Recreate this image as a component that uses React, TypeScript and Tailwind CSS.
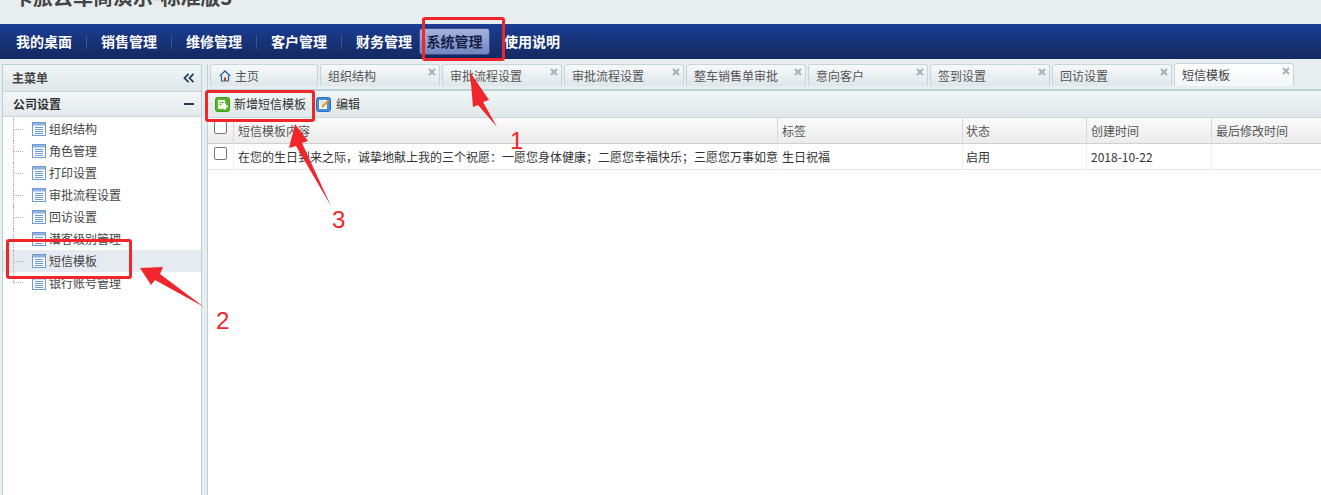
const navItems = ['我的桌面', '销售管理', '维修管理', '客户管理', '财务管理', '系统管理', '使用说明'];
const treeItems = ['组织结构', '角色管理', '打印设置', '审批流程设置', '回访设置', '潜客级别管理', '短信模板', '银行账号管理'];
const tabs = ['组织结构', '审批流程设置', '审批流程设置', '整车销售单审批', '意向客户', '签到设置', '回访设置', '短信模板'];
const message = '在您的生日到来之际，诚挚地献上我的三个祝愿：一愿您身体健康；二愿您幸福快乐；三愿您万事如意';

const TableIcon = () => (
  <svg width="14" height="14" viewBox="0 0 14 14" className="shrink-0">
    <rect x="0.5" y="0.5" width="13" height="13" fill="#ffffff" stroke="#6f9bd4" />
    <rect x="1" y="1" width="12" height="2.5" fill="#8db2e2" />
    <path d="M3 5.5h8M3 7.5h8M3 9.5h8M3 11.5h8" stroke="#6f9bd4" />
  </svg>
);

const HomeIcon = () => (
  <svg width="12" height="12" viewBox="0 0 12 12" className="shrink-0">
    <path d="M0.8 6 6 1l5.2 5" fill="none" stroke="#2f5f9e" strokeWidth="1.3" />
    <path d="M2.5 5.5v5.5h7V5.5" fill="none" stroke="#2f5f9e" strokeWidth="1.2" />
    <rect x="5" y="7.5" width="2" height="3.5" fill="#a2482f" />
  </svg>
);

const AddIcon = () => (
  <svg width="15" height="15" viewBox="0 0 15 15" className="shrink-0">
    <rect x="0.5" y="0.5" width="14" height="14" rx="2" fill="#58b22b" stroke="#3f9a1b" />
    <rect x="3" y="3" width="7" height="9" fill="#e8f6de" />
    <path d="M4.5 5.5h4M4.5 7.5h2" stroke="#58b22b" />
    <path d="M10 6.5v6M7 9.5h6" stroke="#ffffff" strokeWidth="2" />
  </svg>
);

const EditIcon = () => (
  <svg width="15" height="15" viewBox="0 0 15 15" className="shrink-0">
    <rect x="0.5" y="0.5" width="14" height="14" rx="2" fill="#3d8de0" stroke="#2b72c4" />
    <rect x="3" y="3" width="8" height="9" fill="#ffffff" />
    <path d="M4.5 5h3M4.5 7h2" stroke="#9bbfe6" />
    <path d="m5.5 10.5 1-2.5 5-5 1.5 1.5-5 5z" fill="#f0a92c" stroke="#c9711b" strokeWidth="0.5" />
  </svg>
);

const Checkbox = () => (
  <span className="block w-[13px] h-[13px] rounded-[2px] border border-[#767676] bg-white" />
);

const CloseMark = () => (
  <svg width="8" height="8" viewBox="0 0 8 8" className="absolute top-[3px] right-[3px]">
    <path d="M1 1l6 6M7 1 1 7" stroke="#a3b2b8" strokeWidth="2" />
  </svg>
);

const Annotations = () => (
  <>
    <div className="absolute left-[422px] top-[17px] w-[83px] h-[44px] rounded-[3px] border-[3px] border-[#f0262b]" />
    <div className="absolute left-[205px] top-[90px] w-[110px] h-[32px] rounded-[3px] border-[3px] border-[#f0262b]" />
    <div className="absolute left-[6px] top-[239px] w-[126px] h-[40px] rounded-[3px] border-[3px] border-[#f0262b]" />
    <svg width="1321" height="495" viewBox="0 0 1321 495" className="absolute left-0 top-0 pointer-events-none">
      <polygon points="470,72 489,100 483,102 497,127 478,105 473,107" fill="#f0262b" />
      <polygon points="140,268 163,267 160,274 204,307 155,280 151,285" fill="#f0262b" />
      <polygon points="295,124 308,141 302,143 331,206 296,146 289,148" fill="#f0262b" />
    </svg>
    <span className="absolute left-[510px] top-[127px] text-[24px] leading-7 text-[#f0262b] font-['Liberation_Sans',sans-serif]">1</span>
    <span className="absolute left-[216px] top-[307px] text-[24px] leading-7 text-[#f0262b] font-['Liberation_Sans',sans-serif]">2</span>
    <span className="absolute left-[332px] top-[206px] text-[24px] leading-7 text-[#f0262b] font-['Liberation_Sans',sans-serif]">3</span>
  </>
);

const App = () => {
  return (
    <div className="relative w-[1321px] h-[495px] overflow-hidden flex flex-col bg-[#e8eef0] text-[12px] text-[#333333] font-['Noto_Sans_CJK_SC','Noto_Sans',sans-serif]">
      <div className="h-[24px] shrink-0 overflow-hidden pl-[13px]">
        <p className="-mt-[17px] text-[20px] leading-[28px] font-bold text-[#444444]">卡旅云车商演示-标准版3</p>
      </div>

      <nav className="h-[35px] shrink-0 flex items-center pl-[2px] bg-linear-to-b from-[#1b3d94] to-[#13295f]">
        {navItems.map((item, i) => (
          <div key={item} className="flex items-center">
            {item === '系统管理' ? (
              <span className="flex items-center justify-center w-[71px] h-[27px] rounded-[3px] border border-[#3a4f91] bg-linear-to-b from-[#a6b3dc] to-[#7485bf] text-[14px] font-bold text-[#14204a]">
                {item}
              </span>
            ) : (
              <span className={i === 6 ? 'ml-[14px] text-[14px] font-bold text-white' : 'px-[14px] text-[14px] font-bold text-white'}>{item}</span>
            )}
            {i < 4 && <span className="w-px h-[14px] bg-[#3a5596]" />}
            {i === 4 && <span className="w-px h-[14px] bg-transparent -ml-[8px]" />}
          </div>
        ))}
      </nav>

      <div className="flex-1 min-h-0 flex pt-[5px] pl-[2px] gap-[5px]">
        <aside className="w-[200px] shrink-0 flex flex-col border border-[#b9d0d7] border-b-0 bg-white">
          <div className="h-[27px] shrink-0 flex items-center justify-between pl-[9px] pr-[6px] border-b border-[#c7d7dc] bg-linear-to-b from-[#f1f5f6] to-[#dfe7ea]">
            <span className="font-bold text-[#444444]">主菜单</span>
            <svg width="12" height="10" viewBox="0 0 12 10">
              <path d="M5.5 0.8 1.5 5l4 4.2M10.5 0.8 6.5 5l4 4.2" fill="none" stroke="#1f3a5f" strokeWidth="1.8" />
            </svg>
          </div>
          <div className="h-[25px] shrink-0 flex items-center justify-between pl-[10px] pr-[7px] border-b border-[#c7d7dc] bg-linear-to-b from-[#f3f6f7] to-[#e3eaec]">
            <span className="font-bold text-[#333333]">公司设置</span>
            <span className="w-[10px] h-[2px] bg-[#1f3a5f]" />
          </div>
          <ul className="pt-px">
            {treeItems.map((item, i) => (
              <li key={item} className={item === '短信模板' ? 'h-[22px] flex items-center bg-[#e6ebf2]' : 'h-[22px] flex items-center'}>
                <span className={i === 7 ? 'ml-[10px] w-[12px] h-[11px] self-start border-l border-dotted border-[#aaaaaa] flex items-end' : 'ml-[10px] w-[12px] h-full border-l border-dotted border-[#aaaaaa] flex items-center'}>
                  <span className="block w-[9px] border-t border-dotted border-[#aaaaaa]" />
                </span>
                <span className="ml-[7px]"><TableIcon /></span>
                <span className="ml-[3px] text-[#444444]">{item}</span>
              </li>
            ))}
          </ul>
        </aside>

        <main className="flex-1 min-w-0 flex flex-col border-l border-[#b9d0d7] bg-white">
          <div className="h-[27px] shrink-0 flex items-end gap-[2px] pl-[2px] pb-[3px] border-b-[2px] border-[#b9d0d7] bg-[#e8eef0]">
            <div className="w-[108px] h-[22px] flex items-center gap-[4px] pl-[8px] rounded-t-[3px] border border-b-0 border-[#c5d6db] bg-linear-to-b from-[#f6f9fa] to-[#dfe7ea] text-[#555555]">
              <HomeIcon />
              <span>主页</span>
            </div>
            {tabs.map((tab, i) => (
              <div
                key={tab + i}
                className={
                  i === 7
                    ? 'relative w-[120px] h-[23px] flex items-center pl-[7px] rounded-t-[3px] border border-b-0 border-[#c5d6db] bg-linear-to-b from-[#ffffff] to-[#f3f6f7] text-[#444444]'
                    : 'relative w-[120px] h-[22px] flex items-center pl-[7px] rounded-t-[3px] border border-b-0 border-[#c5d6db] bg-linear-to-b from-[#f6f9fa] to-[#dfe7ea] text-[#555555]'
                }
              >
                <span>{tab}</span>
                <CloseMark />
              </div>
            ))}
          </div>

          <div className="h-[27px] shrink-0 flex items-center pl-[7px] border-b border-[#c7d7dc] bg-linear-to-b from-[#f1f5f6] to-[#e1e8eb]">
            <AddIcon />
            <span className="ml-[4px]">新增短信模板</span>
            <span className="ml-[10px]"><EditIcon /></span>
            <span className="ml-[5px]">编辑</span>
          </div>

          <div className="grid grid-cols-[26px_544px_185px_124px_125px_1fr] h-[26px] shrink-0 border-b border-[#d0d0d0] bg-linear-to-b from-[#fafafa] to-[#ececec] text-[#555555]">
            <div className="flex justify-center pt-[3px] border-r border-[#d8d8d8]"><Checkbox /></div>
            <div className="flex items-center pl-[4px] border-r border-[#d8d8d8]">短信模板内容</div>
            <div className="flex items-center pl-[4px] border-r border-[#d8d8d8]">标签</div>
            <div className="flex items-center pl-[3px] border-r border-[#d8d8d8]">状态</div>
            <div className="flex items-center pl-[4px] border-r border-[#d8d8d8]">创建时间</div>
            <div className="flex items-center pl-[4px]">最后修改时间</div>
          </div>

          <div className="grid grid-cols-[26px_544px_185px_124px_125px_1fr] h-[26px] shrink-0 border-b border-[#e8e8e8]">
            <div className="flex justify-center pt-[3px] border-r border-[#eeeeee]"><Checkbox /></div>
            <div className="flex items-center pl-[4px] border-r border-[#eeeeee] overflow-hidden whitespace-nowrap">{message}</div>
            <div className="flex items-center pl-[4px] border-r border-[#eeeeee]">生日祝福</div>
            <div className="flex items-center pl-[3px] border-r border-[#eeeeee]">启用</div>
            <div className="flex items-center pl-[4px] border-r border-[#eeeeee]">2018-10-22</div>
            <div />
          </div>
        </main>
      </div>

      <Annotations />
    </div>
  );
};

export default App;
